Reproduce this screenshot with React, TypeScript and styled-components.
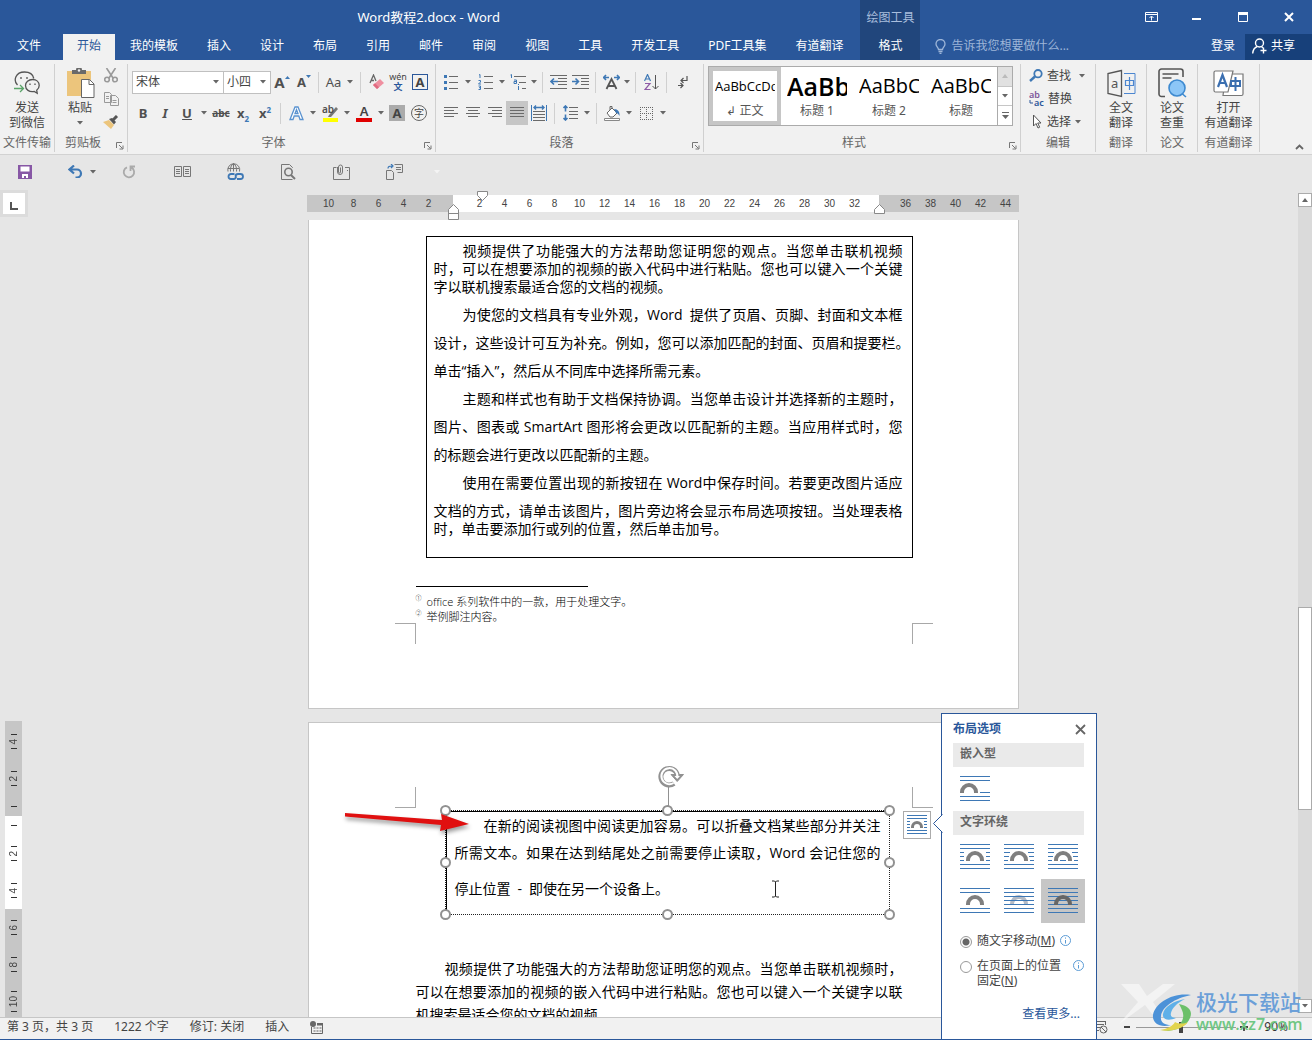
import React from "react";
import styled, { createGlobalStyle } from "styled-components";

const ui = `"Noto Sans", "Noto Sans CJK SC", sans-serif`;
const blue = "#2a579a";
const line = "#6a6a6a";
const accent = "#3e78b5";

const Global = createGlobalStyle`
  * { box-sizing: border-box; }
  html, body { margin: 0; height: 100%; overflow: hidden; }
  body { font: 12px/16px ${ui}; color: #444; background: #e6e6e6; }
  button, input, select { font: inherit; color: inherit; border: 0; background: none; padding: 0; margin: 0; }
  button { white-space: nowrap; }
  svg { display: block; flex: none; }
`;

const Shell = styled.div`
  position: relative;
  display: flex;
  flex-direction: column;
  height: 100vh;
  overflow: hidden;
`;

/* ---------- header ---------- */
const Header = styled.header`
  display: flex;
  height: 60px;
  flex: none;
  background: ${blue};
  color: #fff;
`;
const HeaderCol = styled.div<{ $grow?: boolean; $dark?: boolean }>`
  display: flex;
  flex-direction: column;
  ${(p) => p.$grow && "flex: 1; min-width: 0;"}
  ${(p) => p.$dark && "background: #21467c; width: 60px; flex: none; margin-left: 3px;"}
`;
const TitleRow = styled.div<{ $align?: string; $dim?: boolean }>`
  display: flex;
  height: 34px;
  align-items: center;
  justify-content: ${(p) => p.$align || "center"};
  ${(p) => p.$dim && "color: #a9bedd; padding-top: 2px;"}
`;
const DocTitle = styled.h1`
  margin: 0;
  font-size: 13px;
  line-height: 18px;
  font-weight: 400;
`;
const TabRow = styled.nav`
  display: flex;
  height: 26px;
  gap: 1px;
  align-items: stretch;
`;
const Tab = styled.button<{ $active?: boolean; $file?: boolean }>`
  padding: 0 14px 2px;
  line-height: 24px;
  ${(p) => p.$file && "width: 58px; margin-right: 4px;"}
  ${(p) => p.$active && `background: #f1f1f1; color: ${blue};`}
`;
const SignIn = styled(Tab)`
  padding: 0 9px 2px;
`;
const WinButton = styled.button`
  width: 46px;
  height: 34px;
  display: flex;
  align-items: center;
  justify-content: center;
`;
const TellMe = styled.label`
  display: flex;
  align-items: center;
  gap: 5px;
  flex: 1;
  padding: 0 0 2px 15px;
  min-width: 0;
`;
const TellInput = styled.input`
  width: 160px;
  line-height: 16px;
  outline: none;
  &::placeholder { color: #9db5d8; opacity: 1; }
`;
const Share = styled.button`
  display: flex;
  align-items: center;
  gap: 4px;
  width: 67px;
  padding: 0 0 2px 7px;
  background: #17407a;
`;

/* ---------- ribbon ---------- */
const Ribbon = styled.section`
  display: flex;
  height: 95px;
  flex: none;
  padding: 4px 0 2px;
  background: #f1f1f1;
  border-bottom: 1px solid #d2d2d2;
`;
const Group = styled.div<{ $w?: number }>`
  display: flex;
  flex-direction: column;
  ${(p) => (p.$w ? `flex: 0 0 ${p.$w}px;` : "flex: 1; min-width: 0;")}
  border-right: 1px solid #d0d0d0;
`;
const GroupBody = styled.div<{ $pad?: string; $gap?: number; $row?: boolean }>`
  display: flex;
  flex: none;
  flex-direction: ${(p) => (p.$row ? "row" : "column")};
  height: 70px;
  padding: ${(p) => p.$pad || "0"};
  gap: ${(p) => p.$gap || 0}px;
`;
const GroupFoot = styled.div`
  display: flex;
  align-items: center;
  height: 19px;
  color: #666;
  white-space: nowrap;
  & > span { flex: 1; text-align: center; }
`;
const Launcher = styled.button`
  width: 16px;
  padding: 5px 0 0 5px;
`;
const Row = styled.div`
  display: flex;
  align-items: center;
  height: 24px;
`;
const Tool = styled.button<{ $w?: number; $on?: boolean }>`
  display: flex;
  align-items: center;
  justify-content: center;
  flex: none;
  width: ${(p) => p.$w || 22}px;
  height: 24px;
  ${(p) => p.$on && "background: #c6c6c6;"}
`;
const Sep = styled.span`
  flex: none;
  width: 1px;
  height: 21px;
  margin: 0 4px;
  background: #d0d0d0;
`;
const BigButton = styled.button`
  display: flex;
  flex-direction: column;
  align-items: center;
  width: 100%;
  line-height: 15px;
  white-space: pre;
  padding-top: 2px;
`;
const BigIcon = styled.span`
  display: flex;
  align-items: center;
  height: 34px;
`;
const ArrowLine = styled.span`
  display: flex;
  align-items: center;
  height: 15px;
`;
const PasteWrap = styled.div`
  display: flex;
  padding-left: 5px;
`;
const PasteButton = styled(BigButton)`
  width: 40px;
`;
const Stack = styled.div`
  display: flex;
  flex-direction: column;
`;
const SmallTool = styled(Tool)`
  height: 23px;
`;
const Combo = styled.span<{ $w: number }>`
  position: relative;
  display: flex;
  align-items: center;
  width: ${(p) => p.$w}px;
  height: 23px;
  margin-right: -1px;
  background: #fff;
  border: 1px solid #c0c0c0;
  & > svg { position: absolute; right: 4px; pointer-events: none; }
`;
const Select = styled.select`
  appearance: none;
  width: 100%;
  height: 21px;
  padding: 0 3px;
  line-height: 16px;
`;
const Glyph = styled.span<{ $size?: number; $color?: string; $bold?: boolean; $italic?: boolean; $deco?: string }>`
  font-size: ${(p) => p.$size || 13}px;
  line-height: 18px;
  color: ${(p) => p.$color || "#505050"};
  font-weight: ${(p) => (p.$bold ? 700 : 400)};
  font-style: ${(p) => (p.$italic ? "italic" : "normal")};
  text-decoration: ${(p) => p.$deco || "none"};
  & sub, & sup { font-size: 8px; line-height: 0; color: ${accent}; }
`;
const Phonetic = styled.span`
  display: flex;
  flex-direction: column;
  align-items: center;
  font-size: 9px;
  line-height: 9px;
  & > b { font-size: 9px; line-height: 11px; color: ${blue}; }
`;
const Boxed = styled.span<{ $fill?: boolean; $round?: boolean }>`
  display: flex;
  align-items: center;
  justify-content: center;
  width: 16px;
  height: 16px;
  font-size: ${(p) => (p.$round ? 10 : 13)}px;
  line-height: 14px;
  font-weight: ${(p) => (p.$round ? 400 : 700)};
  ${(p) => (p.$fill ? "background: #ababab;" : `border: 1px solid ${p.$round ? "#666" : blue};`)}
  ${(p) => p.$round && "border-radius: 50%;"}
`;
const Marked = styled.span<{ $bar: string }>`
  width: 16px;
  height: 17px;
  font-size: 13px;
  line-height: 13px;
  text-align: center;
  font-weight: 600;
  border-bottom: 4px solid ${(p) => p.$bar};
`;
const Gallery = styled.div`
  display: flex;
  height: 60px;
  flex: 1;
  min-width: 0;
  margin: 2px 7px 0 4px;
  background: #fff;
  border: 1px solid #ababab;
`;
const StyleItem = styled.button<{ $on?: boolean }>`
  display: flex;
  flex-direction: column;
  align-items: center;
  flex: 0 0 72px;
  padding: 0 2px;
  border: 4px solid ${(p) => (p.$on ? "#c6c6c6" : "transparent")};
  color: #555;
`;
const Preview = styled.span<{ $size: number; $bold?: boolean }>`
  width: 60px;
  height: 32px;
  overflow: hidden;
  text-align: left;
  color: #000;
  font-family: "Open Sans", sans-serif;
  font-size: ${(p) => p.$size}px;
  line-height: 30px;
  font-weight: ${(p) => (p.$bold ? 600 : 400)};
`;
const GalleryBar = styled.div`
  display: flex;
  flex-direction: column;
  width: 15px;
  margin-left: auto;
  border-left: 1px solid #ababab;
`;
const GalleryButton = styled.button<{ $off?: boolean }>`
  display: flex;
  flex: 1;
  align-items: center;
  justify-content: center;
  ${(p) => (p.$off ? "background: #e1e1e1;" : "border-top: 1px solid #c6c6c6;")}
`;
const EditTool = styled.button`
  display: flex;
  align-items: center;
  gap: 4px;
  height: 23px;
`;
const Collapse = styled.button`
  margin: 6px 8px 0 auto;
`;

/* ---------- quick access bar ---------- */
const QuickBar = styled.div`
  display: flex;
  align-items: center;
  height: 35px;
  flex: none;
  padding: 0 0 2px 12px;
`;
const Quick = styled.button<{ $tail?: boolean }>`
  display: flex;
  align-items: center;
  justify-content: center;
  width: ${(p) => (p.$tail ? 20 : 26)}px;
  height: 26px;
  margin-right: ${(p) => (p.$tail ? 0 : 27)}px;
`;
const QuickArrow = styled.button`
  width: 16px;
  margin-right: 15px;
  display: flex;
  justify-content: center;
`;

/* ---------- workspace ---------- */
const Workspace = styled.main`
  display: flex;
  flex: 1;
  min-height: 0;
`;
const Gutter = styled.div`
  flex: 0 0 28px;
  overflow: hidden;
`;
const TabStop = styled.button`
  display: flex;
  align-items: flex-end;
  justify-content: center;
  width: 28px;
  height: 27px;
  padding-bottom: 4px;
  background: #fff;
  border: 3px solid #dcdcdc;
`;
const VRuler = styled.div`
  width: 17px;
  margin: 504px 0 0 5px;
`;
const VPart = styled.div<{ $white?: boolean }>`
  background: ${(p) => (p.$white ? "#fff" : "#c6c6c6")};
`;
const VCell = styled.div<{ $half?: boolean }>`
  display: flex;
  flex-direction: column;
  align-items: center;
  justify-content: center;
  gap: 4px;
  height: ${(p) => (p.$half ? 19 : 37)}px;
  font: 10px/11px "Liberation Sans", sans-serif;
  & > span { writing-mode: vertical-rl; transform: rotate(180deg); }
`;
const VEdge = styled.div`
  height: 2px;
`;
const Tick = styled.i`
  width: 6px;
  height: 1px;
  background: #333;
`;
const Canvas = styled.div`
  display: flex;
  flex-direction: column;
  align-items: center;
  flex: 1;
  min-width: 0;
  overflow: hidden;
`;
const HRuler = styled.div`
  position: relative;
  display: flex;
  flex: none;
  height: 17px;
  margin: 5px 0 8px;
  font: 10px/17px "Liberation Sans", sans-serif;
`;
const HPart = styled.div<{ $white?: boolean; $w: number; $pad: number }>`
  display: flex;
  width: ${(p) => p.$w}px;
  padding-left: ${(p) => p.$pad}px;
  background: ${(p) => (p.$white ? "#fff" : "#c6c6c6")};
`;
const HCell = styled.span`
  width: 25px;
  text-align: center;
`;
const Marker = styled.svg<{ $x: number; $y: number }>`
  position: absolute;
  left: ${(p) => p.$x}px;
  top: ${(p) => p.$y}px;
`;
const Paper = styled.article<{ $h: number; $top: number; $first?: boolean }>`
  position: relative;
  flex: none;
  width: 711px;
  height: ${(p) => p.$h}px;
  padding: ${(p) => p.$top}px 115px 0 107px;
  background: #fff;
  border: 1px solid #c6c6c6;
  ${(p) => p.$first && "border-top: 0; margin-bottom: 13px;"}
  color: #000;
  font: 14px/18px "Open Sans", "Noto Sans CJK SC", sans-serif;
`;
const Frame = styled.div`
  margin: 0 -10px 0 10px;
  padding: 5px 9px 19px 7px;
  border: 1px solid #000;
`;
const Para = styled.p`
  margin: 0;
`;
const Line = styled.span<{ $gap?: number; $indent?: boolean; $end?: boolean; $lh?: number }>`
  display: block;
  white-space: nowrap;
  padding-top: ${(p) => p.$gap || 0}px;
  ${(p) => p.$lh && `line-height: ${p.$lh}px;`}
  ${(p) => p.$indent && "padding-left: 29px;"}
  text-align: justify;
  text-align-last: ${(p) => (p.$end ? "left" : "justify")};
`;
const Notes = styled.ol`
  list-style: none;
  margin: 28px 0 0;
  padding: 0;
  font-size: 11px;
  font-weight: 300;
  line-height: 15px;
  &::before { content: ""; display: block; width: 172px; height: 1px; margin-bottom: 7px; background: #000; }
  & > li { display: flex; }
  & sup { width: 11px; font-size: 6px; line-height: 8px; vertical-align: top; }
`;
const Corner = styled.i<{ $x: number; $y: number; $sides: string }>`
  position: absolute;
  left: ${(p) => p.$x}px;
  top: ${(p) => p.$y}px;
  width: 21px;
  height: 21px;
  border: 0 solid #a8a8a8;
  border-width: ${(p) => p.$sides};
`;
const Selected = styled.div`
  position: relative;
  margin: 0 14px 43px 30px;
  height: 103px;
  padding: 5px 8px 0 8px;
  border: 0 solid #000;
  border-width: 1px 0 0 1px;
  outline: 1px dotted #222;
`;
const Knob = styled.i<{ $x: string; $y: string }>`
  position: absolute;
  left: ${(p) => p.$x};
  top: ${(p) => p.$y};
  width: 11px;
  height: 11px;
  margin: -6px;
  background: #fff;
  border: 2px solid #919191;
  border-radius: 50%;
`;
const Over = styled.svg<{ $x: number; $y: number }>`
  position: absolute;
  left: ${(p) => p.$x}px;
  top: ${(p) => p.$y}px;
`;
const RedArrow = styled(Over)`
  filter: drop-shadow(1px 3px 2px rgba(0, 0, 0, 0.4));
`;
const LayoutButton = styled.button`
  position: absolute;
  left: 594px;
  top: 88px;
  display: flex;
  align-items: center;
  justify-content: center;
  width: 28px;
  height: 28px;
  background: #fff;
  border: 1px solid #ababab;
`;
const ScrollBar = styled.div`
  display: flex;
  flex-direction: column;
  flex: 0 0 14px;
  margin: 3px 0 4px;
  background: #dadada;
`;
const ScrollButton = styled.button`
  display: flex;
  align-items: center;
  justify-content: center;
  height: 14px;
  background: #fff;
  border: 1px solid #ababab;
`;
const Track = styled.div`
  flex: 1;
  display: grid;
  grid-template-rows: 401fr 204fr 189fr;
  & > i { grid-row: 2; background: #fff; border: 1px solid #ababab; }
`;

/* ---------- status bar ---------- */
const Status = styled.footer`
  display: flex;
  align-items: center;
  height: 23px;
  flex: none;
  padding: 0 24px 3px 7px;
  gap: 21px;
  background: #f1f1f1;
  border-top: 1px solid #c6c6c6;
  border-bottom: 1px solid ${blue};
  white-space: nowrap;
`;
const Zoom = styled.div`
  display: flex;
  align-items: center;
  gap: 4px;
  margin-left: auto;
  & > output { margin-left: 12px; color: #333; }
`;
const Range = styled.input`
  appearance: none;
  width: 100px;
  height: 14px;
  background: linear-gradient(#999, #999) center / 100% 1px no-repeat;
  &::-webkit-slider-thumb { appearance: none; width: 4px; height: 11px; background: #444; }
`;

/* ---------- layout options panel ---------- */
const Panel = styled.aside`
  position: absolute;
  left: calc(50% + 285px);
  bottom: 0;
  width: 156px;
  height: 327px;
  padding: 6px 12px 0 11px;
  background: #fff;
  border: 1px solid ${blue};
`;
const PanelHead = styled.div`
  display: flex;
  align-items: center;
  justify-content: space-between;
  height: 18px;
  margin: 0 -2px 5px 0;
  color: ${blue};
`;
const PanelTitle = styled.h2`
  margin: 0;
  font-size: 12px;
  line-height: 16px;
`;
const Section = styled.h3`
  margin: 0;
  height: 24px;
  padding: 2px 7px;
  font-size: 12px;
  line-height: 18px;
  background: #eaeaea;
  color: #666;
`;
const WrapGrid = styled.div`
  display: grid;
  grid-template-columns: repeat(3, 44px);
`;
const WrapButton = styled.button<{ $on?: boolean }>`
  display: flex;
  align-items: center;
  justify-content: center;
  height: 44px;
  ${(p) => p.$on && "background: #c6c6c6;"}
`;
const Option = styled.label`
  display: flex;
  align-items: flex-start;
  gap: 5px;
  padding-left: 7px;
  margin-top: 10px;
  line-height: 15px;
  & > svg { margin: 2px 0 0; }
`;
const OptionText = styled.span<{ $wide?: boolean }>`
  white-space: pre-line;
  ${(p) => p.$wide && "width: 97px;"}
`;
const Radio = styled.input`
  appearance: none;
  flex: none;
  width: 12px;
  height: 12px;
  margin-top: 3px;
  border: 1px solid #999;
  border-radius: 50%;
  &:checked { background: radial-gradient(#666 0 3px, #fff 4px); }
`;
const More = styled.a`
  display: block;
  margin: 18px 4px 0 0;
  text-align: right;
  color: ${blue};
  text-decoration: none;
`;
const Pointer = styled.svg`
  position: absolute;
  left: -10px;
  top: 99px;
`;

/* ---------- site mark ---------- */
const Mark = styled.div`
  position: absolute;
  right: 10px;
  bottom: 0;
  display: flex;
  align-items: flex-end;
  pointer-events: none;
`;
const MarkText = styled.div`
  display: flex;
  flex-direction: column;
  width: 106px;
  margin-left: -2px;
  font-size: 21px;
  font-weight: 500;
  line-height: 24px;
  color: #6b9fd8;
  white-space: nowrap;
`;
const MarkUrl = styled.span`
  font: 600 16px/20px "Open Sans", sans-serif;
  color: #6fc783;
  padding-bottom: 6px;
`;

/* ---------- drawings ---------- */
const Caret = ({ c = "#666" }: { c?: string }) => (
  <svg width="6" height="4" viewBox="0 0 6 4"><path d="M0 0h6L3 3.500z" fill={c} /></svg>
);
const Drop = ({ w = 12 }: { w?: number }) => <Tool $w={w} aria-label="更多"><Caret /></Tool>;
const Corners = () => (
  <Launcher aria-label="对话框启动器">
    <svg width="8" height="8" viewBox="0 0 8 8" fill="none" stroke="#777"><path d="M.5 6V.5H6M3 3l3.500 3.500M7 3.500V7H3.500" /></svg>
  </Launcher>
);
const Lines = ({ rows, c = line }: { rows: [number, number][]; c?: string }) => (
  <svg width="16" height="14" viewBox="0 0 16 14" stroke={c}>
    {rows.map(([a, b], i) => <path key={i} d={`M${a} ${i * 3 + 1.5}H${b}`} />)}
  </svg>
);

const sides: Record<string, number[]> = {
  square: [4, 4, 4],
  tight: [6, 5, 4],
  through: [6, 5, 4],
};
const WrapIcon = ({ kind }: { kind: string }) => {
  const full = kind === "behind" || kind === "front" ? [8.5, 12.5, 16.5] : [];
  const lines = (ys: number[]) => ys.map((y) => <path key={y} d={`M0 ${y}H30`} stroke={accent} />);
  const cx = kind === "inline" ? 9 : 15;
  const arch = (
    <path
      d={`M${cx - 7} 17v-1a7 7 0 0 1 14 0v1`}
      fill="none"
      strokeWidth="4"
      stroke={kind === "behind" ? "#b4bac4" : kind === "front" ? "#666" : "#7f7f7f"}
    />
  );
  return (
    <svg width="30" height="26" viewBox="0 0 30 26">
      {lines([0.5, 4.5, 20.5, 24.5])}
      {kind === "front" && lines(full)}
      {kind === "inline" && <path d="M20 16.500H30" stroke={accent} />}
      {(sides[kind] || []).map((s, i) => (
        <path key={i} d={`M0 ${8.5 + i * 4}H${s}M${30 - s} ${8.5 + i * 4}H30`} stroke={accent} />
      ))}
      {kind === "through" && <path d="M12 16.500H18" stroke={accent} />}
      {arch}
      {kind === "behind" && lines(full)}
    </svg>
  );
};
const SmallWrapIcon = () => (
  <svg width="20" height="20" viewBox="0 0 20 20" fill="none" stroke={accent}>
    <path d="M0 .500H20M0 3.500H20M0 15.500H20M0 18.500H20M0 6.500H3M17 6.500H20M0 9.500H3M17 9.500H20M0 12.500H3M17 12.500H20" />
    <path d="M5.500 13v-1a4.500 4.500 0 0 1 9 0v1" stroke="#7f7f7f" strokeWidth="3" />
  </svg>
);
const Info = () => (
  <svg width="11" height="11" viewBox="0 0 11 11" fill="none" stroke="#5b9bd5">
    <circle cx="5.500" cy="5.500" r="5" /><path d="M5.500 5v3.500M5.500 2.500v1.200" />
  </svg>
);
const Arrow = ({ d }: { d: string }) => <path d={d} fill="none" stroke={accent} strokeWidth="1.600" />;

const PasteIcon = () => (
  <svg width="29" height="30" viewBox="0 0 29 30">
    <path d="M1 3h24v25H1z" fill="#ecc57c" />
    <path d="M6 6V2h4a3 3 0 0 1 6 0h4v4z" fill="#6a6a6a" /><circle cx="13" cy="2.500" r="1.200" fill="#f1f1f1" />
    <path d="M15.500 11.500h8l4.500 4.500v13.500H15.500z" fill="#fff" stroke="#666" /><path d="M23 11.500V16.500h5" fill="none" stroke="#666" />
  </svg>
);
const WechatIcon = () => (
  <svg width="26" height="24" viewBox="0 0 26 24" fill="none" stroke="#555" strokeWidth="1.300">
    <path d="M3.500 14C-1 9.500 1.500 1 10.500 1c5 0 8.500 2.500 9.300 6.500" />
    <path d="M18.500 8.500c4 0 6.700 2.500 6.700 6 0 2-1 3.500-2.500 4.700l.5 3-3-1.700c-5 1-8.700-2-8.700-6 0-3.500 3-6 7-6z" />
    <path d="M7 6v2M13 6v2M16 12.500v1.500M21 12.500v1.500" />
    <path d="M0 17.500h9M6 14l3.500 3.500L6 21" stroke="#5aa469" />
  </svg>
);

const tabs = ["我的模板", "插入", "设计", "布局", "引用", "邮件", "审阅", "视图", "工具", "开发工具", "PDF工具集", "有道翻译"];
const range = (a: number, b: number, s: number) =>
  Array.from({ length: Math.floor(Math.abs(b - a) / s) + 1 }, (_, i) => a + (b > a ? i * s : -i * s));
const VNum = ({ n }: { n: number }) => <VCell><Tick /><span>{n}</span><Tick /></VCell>;
const stops = ["-1px", "50%", "calc(100% + 1px)"];

export default function App() {
  return (
    <Shell lang="zh-CN">
      <Global />
      <Header>
        <HeaderCol>
          <TitleRow><DocTitle>Word教程2.docx - Word</DocTitle></TitleRow>
          <TabRow>
            <Tab $file>文件</Tab>
            <Tab $active>开始</Tab>
            {tabs.map((t) => <Tab key={t}>{t}</Tab>)}
          </TabRow>
        </HeaderCol>
        <HeaderCol $dark>
          <TitleRow $dim>绘图工具</TitleRow>
          <Tab>格式</Tab>
        </HeaderCol>
        <HeaderCol $grow>
          <TitleRow $align="flex-end">
            <WinButton aria-label="功能区显示选项">
              <svg width="13" height="10" viewBox="0 0 13 10" fill="none" stroke="#fff"><path d="M.5.5h12v9H.5zM.5 2.500h12M6.500 8.500V4.500M4.500 6l2-2 2 2" /></svg>
            </WinButton>
            <WinButton aria-label="最小化"><svg width="10" height="10" viewBox="0 0 10 10"><path d="M0 6h9v2H0z" fill="#fff" /></svg></WinButton>
            <WinButton aria-label="最大化"><svg width="10" height="10" viewBox="0 0 10 10"><path d="M.5 1.500h9v8h-9z" fill="none" stroke="#fff" /><path d="M0 0h10v3H0z" fill="#fff" /></svg></WinButton>
            <WinButton aria-label="关闭"><svg width="10" height="10" viewBox="0 0 10 10"><path d="M1 1l8 8M9 1L1 9" stroke="#fff" strokeWidth="2" /></svg></WinButton>
          </TitleRow>
          <TabRow>
            <TellMe>
              <svg width="11" height="15" viewBox="0 0 11 15" fill="none" stroke="#9db5d8" strokeWidth="1.300"><path d="M3.500 10.500c0-2-2.500-3-2.500-5.500a4.500 4.500 0 0 1 9 0c0 2.500-2.500 3.500-2.500 5.500zM3.500 12.500h4M4.500 14.300h2" /></svg>
              <TellInput aria-label="告诉我您想要做什么" placeholder="告诉我您想要做什么..." />
            </TellMe>
            <SignIn>登录</SignIn>
            <Share>
              <svg width="15" height="16" viewBox="0 0 15 16" fill="none" stroke="#fff" strokeWidth="1.400"><circle cx="7.500" cy="5" r="4" /><path d="M.7 15.500c.3-4 2-6 4.500-7M9.500 8.500l1.500 1.500M8.500 12.500h6M11.500 9.500v6" /></svg>
              共享
            </Share>
          </TabRow>
        </HeaderCol>
      </Header>

      <Ribbon>
        <Group $w={55}>
          <GroupBody><BigButton><BigIcon><WechatIcon /></BigIcon>{"发送\n到微信"}</BigButton></GroupBody>
          <GroupFoot><span>文件传输</span></GroupFoot>
        </Group>
        <Group $w={73}>
          <GroupBody>
            <PasteWrap>
              <PasteButton>
                <BigIcon><PasteIcon /></BigIcon>粘贴
                <ArrowLine><Caret /></ArrowLine>
              </PasteButton>
              <Stack>
                <SmallTool aria-label="剪切">
                  <svg width="14" height="15" viewBox="0 0 14 15" fill="none" stroke="#999" strokeWidth="1.600"><path d="M2.500 0l6.500 10M11.500 0L5 10" /><circle cx="3" cy="11.500" r="2.300" /><circle cx="11" cy="11.500" r="2.300" /></svg>
                </SmallTool>
                <SmallTool aria-label="复制">
                  <svg width="15" height="14" viewBox="0 0 15 14" fill="#f1f1f1" stroke="#999"><path d="M.5.5h5l2 2v8h-7zM6.500 3.500h5l3 3v7h-8zM2 4.500h3M2 6.500h3M8.500 8.500h4M8.500 10.500h4" /></svg>
                </SmallTool>
                <SmallTool aria-label="格式刷">
                  <svg width="16" height="14" viewBox="0 0 16 14"><path d="M0 7l6-2 5 5-3 4z" fill="#ecc57c" /><path d="M6 4l3-1 4 4-2 2.500z" fill="#555" /><path d="M10 5l4-4" stroke="#555" strokeWidth="3" /></svg>
                </SmallTool>
              </Stack>
            </PasteWrap>
          </GroupBody>
          <GroupFoot><span>剪贴板</span><Corners /></GroupFoot>
        </Group>

        <Group $w={308}>
          <GroupBody $pad="6px 3px 0 4px" $gap={7}>
            <Row>
              <Combo $w={92}><Select aria-label="字体"><option>宋体</option></Select><Caret /></Combo>
              <Combo $w={48}><Select aria-label="字号"><option>小四</option></Select><Caret /></Combo>
              <Tool $w={24} aria-label="增大字号"><Glyph $size={15} $bold>A</Glyph><svg width="5" height="12" viewBox="0 0 5 12"><path d="M0 3h5L2.500 0z" fill={accent} /></svg></Tool>
              <Tool $w={20} aria-label="减小字号"><Glyph $size={13} $bold>A</Glyph><svg width="5" height="14" viewBox="0 0 5 14"><path d="M0 0h5L2.500 3z" fill={accent} /></svg></Tool>
              <Sep />
              <Tool $w={21} aria-label="更改大小写"><Glyph>Aa</Glyph></Tool><Drop />
              <Sep />
              <Tool aria-label="清除格式">
                <svg width="15" height="16" viewBox="0 0 15 16"><path d="M1 9l3.500-8L7 7M2 6.500h3" stroke="#666" fill="none" strokeWidth="1.300" /><path d="M4 11l7-6 4 4-7 6z" fill="#ef8fa0" /><path d="M4 11l2-1.700 4 4L8 15z" fill="#e06a80" /></svg>
              </Tool>
              <Tool aria-label="拼音指南"><Phonetic>wén<b>文</b></Phonetic></Tool>
              <Tool aria-label="字符边框"><Boxed>A</Boxed></Tool>
            </Row>
            <Row>
              <Tool aria-label="加粗"><Glyph $bold>B</Glyph></Tool>
              <Tool aria-label="倾斜"><Glyph $bold $italic>I</Glyph></Tool>
              <Tool aria-label="下划线"><Glyph $bold $deco="underline">U</Glyph></Tool>
              <Drop />
              <Tool aria-label="删除线"><Glyph $size={10} $bold $deco="line-through">abc</Glyph></Tool>
              <Tool aria-label="下标"><Glyph $bold>x<sub>2</sub></Glyph></Tool>
              <Tool aria-label="上标"><Glyph $bold>x<sup>2</sup></Glyph></Tool>
              <Sep />
              <Tool aria-label="文本效果">
                <svg width="15" height="15" viewBox="0 0 15 15" fill="none" stroke="#5b93d0"><path d="M1 13.500L6 1h3l5 12.500h-3L9.800 10H5.200L4 13.500zM6 7.500h3L7.500 3.500z" fill="#fff" strokeWidth="1.300" /></svg>
              </Tool><Drop />
              <Tool aria-label="突出显示">
                <svg width="17" height="17" viewBox="0 0 17 17"><path d="M1 13h15v4H1z" fill="#ff0" /><path d="M7 10l7-8 2 2-7 8H6z" fill="#777" /><text x="0" y="8" fontSize="10" fontWeight="600" fill="#505050">ab</text></svg>
              </Tool><Drop />
              <Tool aria-label="字体颜色"><Marked $bar="#e00000">A</Marked></Tool><Drop w={11} />
              <Tool aria-label="字符底纹"><Boxed $fill>A</Boxed></Tool>
              <Tool aria-label="带圈字符"><Boxed $round>字</Boxed></Tool>
            </Row>
          </GroupBody>
          <GroupFoot><span>字体</span><Corners /></GroupFoot>
        </Group>

        <Group $w={268}>
          <GroupBody $pad="6px 0 0 4px" $gap={7}>
            <Row>
              <Tool aria-label="项目符号">
                <svg width="14" height="16" viewBox="0 0 14 16"><path d="M0 1h3v3H0zM0 7h3v3H0zM0 13h3v3H0z" fill={accent} /><path d="M5 2.500h9M5 8.500h9M5 14.500h9" stroke={line} /></svg>
              </Tool><Drop />
              <Tool aria-label="编号">
                <svg width="15" height="16" viewBox="0 0 15 16"><path d="M1 1l1-.5V4M.5 6.500h2v1.500l-2 2h2.500M.5 12h2v3.500h-2M1 13.700h1.500" stroke={accent} fill="none" /><path d="M6 2.500h9M6 8.500h9M6 14.500h9" stroke={line} /></svg>
              </Tool><Drop w={11} />
              <Tool aria-label="多级列表">
                <svg width="16" height="16" viewBox="0 0 16 16"><path d="M.5 1l1-.5V4M4 6h2.500v3.500H4v-2h2.500M8.500 12v4M8.500 10v1" stroke={accent} fill="none" /><path d="M4 2.500h12M9 8.500h7M12 14.500h4" stroke={line} /></svg>
              </Tool><Drop w={9} />
              <Sep />
              <Tool aria-label="减少缩进">
                <svg width="17" height="14" viewBox="0 0 17 14"><path d="M0 .5h17M8 3.500h9M8 6.500h9M8 9.500h9M0 13.500h17" stroke={line} /><Arrow d="M8 6.500H1M4 3.500l-3 3 3 3" /></svg>
              </Tool>
              <Tool aria-label="增加缩进">
                <svg width="17" height="14" viewBox="0 0 17 14"><path d="M0 .5h17M9 3.500h8M9 6.500h8M9 9.500h8M0 13.500h17" stroke={line} /><Arrow d="M0 6.500H6M3.500 3.500l3 3-3 3" /></svg>
              </Tool>
              <Sep />
              <Tool aria-label="中文版式">
                <svg width="17" height="16" viewBox="0 0 17 16"><path d="M3.500 15L8.500 5l5 10M5.500 12h6" stroke="#555" fill="none" strokeWidth="1.800" /><Arrow d="M0 3.500h6M3 1L.700 3.500 3 6M11 3.500h6M14 1l2.300 2.500L14 6" /></svg>
              </Tool><Drop w={9} />
              <Sep />
              <Tool aria-label="排序">
                <svg width="15" height="17" viewBox="0 0 15 17" fill="none"><path d="M.5 7L3.500.500 6.500 7M1.500 5h4" stroke={accent} strokeWidth="1.200" /><path d="M1 9.500h5l-5 6h5.500" stroke="#8e5ba6" strokeWidth="1.200" /><path d="M11.500 1v14M8.500 12l3 3 3-3" stroke="#555" /></svg>
              </Tool>
              <Sep />
              <Tool aria-label="显示编辑标记">
                <svg width="11" height="13" viewBox="0 0 11 13" fill="none" stroke="#555"><path d="M10 0v4.500H4M6.500 2L4 4.500 6.500 7M1 9.500h5M3.500 7l2.500 2.500L3.500 12" strokeWidth="1.200" /></svg>
              </Tool>
            </Row>
            <Row>
              <Tool aria-label="左对齐"><Lines rows={[[1, 15], [1, 11], [1, 15], [1, 11]]} /></Tool>
              <Tool aria-label="居中"><Lines rows={[[1, 15], [3, 13], [1, 15], [3, 13]]} /></Tool>
              <Tool aria-label="右对齐"><Lines rows={[[1, 15], [5, 15], [1, 15], [5, 15]]} /></Tool>
              <Tool $on aria-label="两端对齐"><Lines rows={[[1, 15], [1, 15], [1, 15], [1, 15]]} /></Tool>
              <Tool aria-label="分散对齐">
                <svg width="16" height="16" viewBox="0 0 16 16"><path d="M.5 0v16M15.500 0v16" stroke={accent} /><path d="M2 6.500h12M2 9.500h12M2 12.500h12M2 15.500h12" stroke={line} /><path d="M3 2.500h10M5 .500l-2 2 2 2M11 .500l2 2-2 2" stroke={accent} fill="none" strokeWidth="1.400" /></svg>
              </Tool>
              <Sep />
              <Tool aria-label="行距">
                <svg width="15" height="16" viewBox="0 0 15 16"><path d="M6 2.500h9M6 6.500h9M6 9.500h9M6 13.500h9" stroke={line} /><Arrow d="M2.500 1v5.500M.5 3l2-2 2 2M2.500 9.500V15M.5 13l2 2 2-2" /></svg>
              </Tool><Drop w={11} />
              <Sep />
              <Tool aria-label="底纹">
                <svg width="17" height="16" viewBox="0 0 17 16"><path d="M.5 13.500h15v2H.5z" fill="#fff" stroke="#888" /><path d="M3 8l5-5 5 5-4 4H6z" fill="#fff" stroke="#666" /><path d="M6 5V1.500h2V3" fill="none" stroke="#666" /><path d="M10 4c4 0 6 3 5.500 7-1-2-2-3-3.500-3z" fill={accent} /></svg>
              </Tool><Drop />
              <Tool aria-label="边框">
                <svg width="13" height="13" viewBox="0 0 13 13" fill="none" stroke="#666" strokeDasharray="1 1"><path d="M0 .5h13M.5 0v13M12.500 0v13M0 6.500h13M6.500 0v13M0 12.500h13" /></svg>
              </Tool><Drop />
            </Row>
          </GroupBody>
          <GroupFoot><span>段落</span><Corners /></GroupFoot>
        </Group>

        <Group>
          <GroupBody $row>
            <Gallery>
              <StyleItem $on><Preview $size={13}>AaBbCcDd</Preview><span>↲ 正文</span></StyleItem>
              <StyleItem><Preview $size={25} $bold>AaBb</Preview><span>标题 1</span></StyleItem>
              <StyleItem><Preview $size={20}>AaBbC</Preview><span>标题 2</span></StyleItem>
              <StyleItem><Preview $size={20}>AaBbC</Preview><span>标题</span></StyleItem>
              <GalleryBar>
                <GalleryButton $off aria-label="上一行"><svg width="6" height="4" viewBox="0 0 6 4"><path d="M0 4h6L3 0z" fill="#bbb" /></svg></GalleryButton>
                <GalleryButton aria-label="下一行"><Caret /></GalleryButton>
                <GalleryButton aria-label="其他"><svg width="7" height="7" viewBox="0 0 7 7"><path d="M0 0h7v1H0zM0 3h7L3.500 7z" fill="#666" /></svg></GalleryButton>
              </GalleryBar>
            </Gallery>
          </GroupBody>
          <GroupFoot><span>样式</span><Corners /></GroupFoot>
        </Group>

        <Group $w={75}>
          <GroupBody $pad="0 0 0 8px">
            <EditTool>
              <svg width="14" height="13" viewBox="0 0 14 13" fill="none" stroke={accent} strokeWidth="1.800"><circle cx="9" cy="4.700" r="3.700" /><path d="M6 7.500L1 12" strokeWidth="2.400" /></svg>
              查找<Tool $w={14} as="span"><Caret /></Tool>
            </EditTool>
            <EditTool>
              <svg width="15" height="15" viewBox="0 0 15 15"><text x="0" y="7" fontSize="9" fontWeight="600" fill="#7c5699">ab</text><text x="5" y="15" fontSize="9" fontWeight="600" fill={blue}>ac</text><path d="M1 9v3h3" fill="none" stroke={blue} /></svg>
              替换
            </EditTool>
            <EditTool>
              <svg width="14" height="15" viewBox="0 0 14 15"><path d="M4.500 1v11l2.500-2.500 2 4.500 1.700-.8-2-4.200H12z" fill="#fff" stroke="#555" /></svg>
              选择<Caret />
            </EditTool>
          </GroupBody>
          <GroupFoot><span>编辑</span></GroupFoot>
        </Group>
        <Group $w={51}>
          <GroupBody>
            <BigButton>
              <BigIcon>
                <svg width="29" height="29" viewBox="0 0 29 29" fill="none" stroke="#555"><path d="M14.500 1.500L1 4.500v20l13.500 3z" strokeWidth="1.300" /><path d="M17 4.500h11v20H17" stroke="#4c86d0" /><path d="M18.500 11.500h8v5h-8zM22.500 8v13" stroke="#4c86d0" strokeWidth="1.200" /><text x="4" y="19" fontSize="13" stroke="none" fill="#555">a</text></svg>
              </BigIcon>{"全文\n翻译"}
            </BigButton>
          </GroupBody>
          <GroupFoot><span>翻译</span></GroupFoot>
        </Group>
        <Group $w={51}>
          <GroupBody>
            <BigButton>
              <BigIcon>
                <svg width="29" height="30" viewBox="0 0 29 30" fill="none" stroke="#555" strokeWidth="1.600"><path d="M25 9V3.500a2.500 2.500 0 0 0-2.500-2.500H3.500A2.500 2.500 0 0 0 1 3.500V26a2.500 2.500 0 0 0 2.500 2.500H7M4.500 6h16M4.500 10h9" /><circle cx="19" cy="20" r="8" fill="#8cc6f7" stroke="#3e8ad0" /><path d="M24.500 26l3.500 3" stroke="#3e8ad0" /></svg>
              </BigIcon>{"论文\n查重"}
            </BigButton>
          </GroupBody>
          <GroupFoot><span>论文</span></GroupFoot>
        </Group>
        <Group $w={62}>
          <GroupBody>
            <BigButton>
              <BigIcon>
                <svg width="31" height="27" viewBox="0 0 31 27" fill="#fff" stroke="#777" strokeWidth="1.200"><path d="M13 4h17v20a1.500 1.500 0 0 1-1.500 1.500H10z" /><path d="M1 2.500A1.500 1.500 0 0 1 2.500 1H20l-5 21H2.500A1.500 1.500 0 0 1 1 20.500z" /><path d="M5 17L9.500 5 14 17M6.500 13h6" fill="none" stroke="#3b6fb0" strokeWidth="2.200" /><path d="M18 11h9v5h-9zM22.500 7v14" fill="none" stroke="#3b6fb0" strokeWidth="2" /></svg>
              </BigIcon>{"打开\n有道翻译"}
            </BigButton>
          </GroupBody>
          <GroupFoot><span>有道翻译</span></GroupFoot>
        </Group>
        <Stack>
          <GroupBody $pad="0 0 0 52px" />
          <Collapse aria-label="折叠功能区"><svg width="9" height="12" viewBox="0 -4 9 12" fill="none" stroke="#666" strokeWidth="1.800"><path d="M1 5l3.500-3.500L8 5" /></svg></Collapse>
        </Stack>
      </Ribbon>

      <QuickBar>
        <Quick aria-label="保存"><svg width="14" height="14" viewBox="0 0 14 14"><path d="M0 0h14v14H0z" fill="#8757a5" /><path d="M2.500 1.500h9v5h-9zM4 9h6v4H8v-2H6v2H4z" fill="#fff" /></svg></Quick>
        <Quick $tail aria-label="撤消"><svg width="15" height="13" viewBox="0 0 15 13" fill="none" stroke={accent} strokeWidth="2.200"><path d="M6 .500L1.500 4.500 6 8.500M2 4.500h7a4 4 0 0 1 0 8H7.500" /></svg></Quick>
        <QuickArrow aria-label="撤消列表"><Caret /></QuickArrow>
        <Quick aria-label="重复"><svg width="14" height="14" viewBox="0 0 14 14" fill="none" stroke="#aaa" strokeWidth="1.800"><path d="M5 2.300a5.200 5.200 0 1 0 4.500.3M13 1.500H8.500V6" /></svg></Quick>
        <Quick aria-label="双页"><svg width="17" height="11" viewBox="0 0 17 11" fill="none" stroke="#777"><path d="M.5.500h7v10h-7zM9.500.500h7v10h-7zM2 3.500h4M2 5.500h4M2 7.500h4M11 3.500h4M11 5.500h4M11 7.500h4" /></svg></Quick>
        <Quick aria-label="超链接"><svg width="17" height="17" viewBox="0 0 17 17" fill="none" stroke="#777"><path d="M1 8.500a6 6 0 1 1 11.500 0M6.500.500v8M1 5.500h11M3.500 8.500c-.5-3 .5-6.500 3-8 2.500 1.500 3.500 5 3 8" /><path d="M7.500 11H4a2.500 2.500 0 0 0 0 5h3a2.500 2.500 0 0 0 2-2.500M10 16h3.500a2.500 2.500 0 0 0 0-5H11a2.500 2.500 0 0 0-2.500 2.500" stroke={accent} strokeWidth="1.800" /></svg></Quick>
        <Quick aria-label="打印预览"><svg width="15" height="16" viewBox="0 0 15 16" fill="none" stroke="#777"><path d="M11.500 4V3.500L8.500.500h-8v15h11" /><circle cx="7.500" cy="8" r="3.700" strokeWidth="1.600" /><path d="M10 11l4 4" strokeWidth="2" /></svg></Quick>
        <Quick aria-label="附件"><svg width="17" height="16" viewBox="0 0 17 16" fill="none" stroke="#777"><path d="M3.500 3.500h-3v12h16v-12H12M14 6.500h1" /><path d="M4.500 3v5a2.500 2.500 0 0 0 5 0V3a2 2 0 0 0-4 0v5a1 1 0 0 0 2 0V3.500" /></svg></Quick>
        <Quick aria-label="发送"><svg width="17" height="16" viewBox="0 0 17 16" fill="none" stroke="#777"><path d="M.5 6.500h5l2 2v7h-7zM8.500.500h8v8h-5M10 3.500h5M10 5.500h5" /><path d="M2 4.500c0-2 1-2.500 4-2.500M5 0l2 2-2 2" stroke={accent} strokeWidth="1.200" /></svg></Quick>
        <Caret c="#f4f4f4" />
      </QuickBar>

      <Workspace>
        <Gutter>
          <TabStop aria-label="制表符"><svg width="8" height="8" viewBox="0 0 8 8"><path d="M1 0v7h7" fill="none" stroke="#555" strokeWidth="2" /></svg></TabStop>
          <VRuler>
            <VPart><VEdge /><VNum n={4} /><VNum n={2} /><VCell $half><Tick /></VCell></VPart>
            <VPart $white><VCell $half><Tick /></VCell><VNum n={2} /><VNum n={4} /></VPart>
            <VPart><VNum n={6} /><VNum n={8} /><VNum n={10} /></VPart>
          </VRuler>
        </Gutter>
        <Canvas>
          <HRuler>
            <HPart $w={146} $pad={9}>{range(10, 2, 2).map((n) => <HCell key={n}>{n}</HCell>)}</HPart>
            <HPart $w={426} $pad={14} $white>{range(2, 32, 2).map((n) => <HCell key={n}>{n}</HCell>)}</HPart>
            <HPart $w={140} $pad={14}>{range(36, 44, 2).map((n) => <HCell key={n}>{n}</HCell>)}</HPart>
            <Marker $x={170} $y={-4} width="11" height="10" viewBox="0 0 11 10"><path d="M.5.500h10v4l-5 5-5-5z" fill="#fff" stroke="#888" /></Marker>
            <Marker $x={141} $y={9} width="11" height="16" viewBox="0 0 11 16"><path d="M.5 15.500v-10l5-5 5 5v10zM.5 9.500h10" fill="#fff" stroke="#888" /></Marker>
            <Marker $x={567} $y={9} width="11" height="10" viewBox="0 0 11 10"><path d="M.5 9.500v-4l5-5 5 5v4z" fill="#fff" stroke="#888" /></Marker>
          </HRuler>

          <Paper $h={489} $top={16} $first>
            <Frame>
              <Para>
                <Line $indent>视频提供了功能强大的方法帮助您证明您的观点。当您单击联机视频</Line>
                <Line>时，可以在想要添加的视频的嵌入代码中进行粘贴。您也可以键入一个关键</Line>
                <Line $end>字以联机搜索最适合您的文档的视频。</Line>
              </Para>
              <Para>
                <Line $gap={10} $indent>为使您的文档具有专业外观，Word&ensp;提供了页眉、页脚、封面和文本框</Line>
                <Line $gap={10}>设计，这些设计可互为补充。例如，您可以添加匹配的封面、页眉和提要栏。</Line>
                <Line $gap={10} $end>单击“插入”，然后从不同库中选择所需元素。</Line>
              </Para>
              <Para>
                <Line $gap={10} $indent>主题和样式也有助于文档保持协调。当您单击设计并选择新的主题时，</Line>
                <Line $gap={10}>图片、图表或 SmartArt 图形将会更改以匹配新的主题。当应用样式时，您</Line>
                <Line $gap={10} $end>的标题会进行更改以匹配新的主题。</Line>
              </Para>
              <Para>
                <Line $gap={10} $indent>使用在需要位置出现的新按钮在 Word中保存时间。若要更改图片适应</Line>
                <Line $gap={10}>文档的方式，请单击该图片，图片旁边将会显示布局选项按钮。当处理表格</Line>
                <Line $end>时，单击要添加行或列的位置，然后单击加号。</Line>
              </Para>
            </Frame>
            <Notes>
              <li><sup>①</sup><span>office 系列软件中的一款，用于处理文字。</span></li>
              <li><sup>②</sup><span>举例脚注内容。</span></li>
            </Notes>
            <Corner $x={86} $y={403} $sides="1px 1px 0 0" />
            <Corner $x={603} $y={403} $sides="1px 0 0 1px" />
          </Paper>

          <Paper $h={480} $top={88}>
            <Corner $x={86} $y={64} $sides="0 1px 1px 0" />
            <Corner $x={603} $y={64} $sides="0 0 1px 1px" />
            <Selected>
              <Para>
                <Line $indent>在新的阅读视图中阅读更加容易。可以折叠文档某些部分并关注</Line>
                <Line $gap={9}>所需文本。如果在达到结尾处之前需要停止读取，Word 会记住您的</Line>
                <Line $gap={18} $end>停止位置&ensp;-&ensp;即使在另一个设备上。</Line>
              </Para>
              <Over $x={221} $y={-26} width="2" height="26" viewBox="0 0 2 26"><path d="M.5 0v26" stroke="#919191" /></Over>
              {stops.flatMap((y) =>
                stops.filter((x) => !(x === "50%" && y === "50%")).map((x) => <Knob key={x + y} $x={x} $y={y} />)
              )}
              <Over $x={211} $y={-47} width="26" height="24" viewBox="0 0 26 24" fill="none" stroke="#919191">
                <path d="M16 18.500A8.300 8.300 0 1 1 19.300 10" strokeWidth="5" />
                <path d="M13 9.500h12.500l-6.300 7z" fill="#919191" />
                <path d="M15.500 18A8 8 0 1 1 19.300 12.500" stroke="#fff" strokeWidth="2" />
                <path d="M16.500 11h5.500l-2.800 3z" fill="#fff" stroke="none" />
              </Over>
              <Over $x={324} $y={68} width="9" height="18" viewBox="0 0 9 18"><path d="M1 1h2.500l1 1 1-1H8M4.500 2v14M1 17h2.500l1-1 1 1H8" fill="none" stroke="#222" /></Over>
            </Selected>
            <Para>
              <Line $indent $lh={23}>视频提供了功能强大的方法帮助您证明您的观点。当您单击联机视频时，</Line>
              <Line $lh={23}>可以在想要添加的视频的嵌入代码中进行粘贴。您也可以键入一个关键字以联</Line>
              <Line $end $lh={23}>机搜索最适合您的文档的视频。</Line>
            </Para>
            <LayoutButton aria-label="布局选项"><SmallWrapIcon /></LayoutButton>
            <RedArrow $x={32} $y={84} width="136" height="32" viewBox="0 0 136 32">
              <path d="M4 6l97 7-1-6 28 10-29 7 1-6L4 9.500z" fill="#e01010" />
            </RedArrow>
          </Paper>
        </Canvas>
        <ScrollBar>
          <ScrollButton aria-label="向上"><svg width="6" height="4" viewBox="0 0 6 4"><path d="M0 4h6L3 0z" fill="#666" /></svg></ScrollButton>
          <Track><i /></Track>
          <ScrollButton aria-label="向下"><Caret /></ScrollButton>
        </ScrollBar>
      </Workspace>

      <Status>
        <span>第 3 页，共 3 页</span>
        <span>1222 个字</span>
        <span>修订: 关闭</span>
        <span>插入</span>
        <svg width="13" height="13" viewBox="0 0 13 13"><path d="M1.500 6v6.500h11V2.500H7" fill="none" stroke="#666" /><circle cx="3" cy="3" r="3" fill="#666" /><path d="M7 2h6v2.500H7zM3.500 6.500h2v1h-2zM6.500 6.500h2v1h-2zM9.500 6.500h2v1h-2zM3.500 9.500h2v1h-2zM6.500 9.500h2v1h-2zM9.500 9.500h2v1h-2z" fill="#666" /></svg>
        <Zoom>
          <svg width="14" height="13" viewBox="0 0 14 13" fill="none" stroke="#666"><path d="M0 .500h12M2 3.500h8M2 6.500h4M2 9.500h3M11.500.500V4" /><circle cx="9.500" cy="8.500" r="3.500" fill="#f1f1f1" /><path d="M7 6l5 5" /></svg>
          <svg width="20" height="10" viewBox="0 0 20 10"><path d="M12 4h6v2h-6z" fill="#444" /></svg>
          <Range type="range" aria-label="缩放" min={10} max={190} defaultValue={90} />
          <svg width="8" height="8" viewBox="0 0 8 8"><path d="M0 4h8M4 0v8" stroke="#444" strokeWidth="1.800" /></svg>
          <output>90%</output>
        </Zoom>
      </Status>

      <Panel>
        <Pointer width="11" height="22" viewBox="0 0 11 22"><path d="M11 1L1.500 10.500 11 20z" fill="#fff" /><path d="M10.500 1.500l-9 9 9 9" fill="none" stroke={blue} /></Pointer>
        <PanelHead>
          <PanelTitle>布局选项</PanelTitle>
          <button aria-label="关闭"><svg width="11" height="11" viewBox="0 0 11 11"><path d="M1 1l9 9M10 1l-9 9" stroke="#666" strokeWidth="1.800" /></svg></button>
        </PanelHead>
        <Section>嵌入型</Section>
        <WrapGrid><WrapButton aria-label="嵌入型"><WrapIcon kind="inline" /></WrapButton></WrapGrid>
        <Section>文字环绕</Section>
        <WrapGrid>
          {["square", "tight", "through", "topbottom", "behind", "front"].map((k) => (
            <WrapButton key={k} $on={k === "front"} aria-label={k}><WrapIcon kind={k} /></WrapButton>
          ))}
        </WrapGrid>
        <Option>
          <Radio type="radio" name="anchor" defaultChecked />
          <OptionText>随文字移动(<u>M</u>)</OptionText><Info />
        </Option>
        <Option>
          <Radio type="radio" name="anchor" />
          <OptionText $wide>{"在页面上的位置\n固定("}<u>N</u>)</OptionText><Info />
        </Option>
        <More href="#more">查看更多...</More>
      </Panel>

      <Mark>
        <svg width="110" height="58" viewBox="-31 0 110 58">
          <path d="M2 2h18l8 12L44 2h12L34 20l8 12h-9l-7-9L0 42l19-22z" fill="#fff" opacity=".5" />
          <path d="M72 13c-18-3-36 8-38 20-1 9 8 13 18 10-7 0-11-3-10-9 1-9 14-18 30-21z" fill="#4c92d8" />
          <path d="M66 17c-12 2-21 8-22 15-1 6 6 7 13 4-4 0-6-2-5-5 1-5 6-10 14-14z" fill="#5fb0e8" />
          <path d="M60 22c10 2 14 7 11 14-3 8-15 14-28 13 11-1 20-6 21-13 1-5-1-8-4-14z" fill="#6cc06a" />
          <path d="M56 40c-2 4-8 7-15 8 8 2 22 0 28-8-4 2-9 2-13 0z" fill="#e2d44e" />
        </svg>
        <MarkText>极光下载站<MarkUrl>www.xz7.com</MarkUrl></MarkText>
      </Mark>
    </Shell>
  );
}
